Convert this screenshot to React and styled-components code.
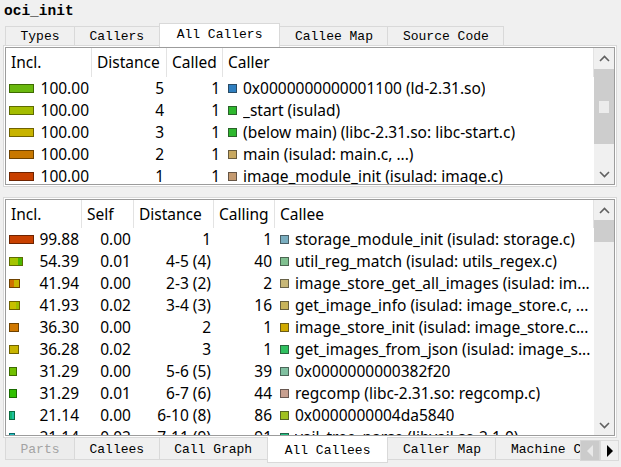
import React from 'react';
import styled, { createGlobalStyle } from 'styled-components';

const GlobalStyle = createGlobalStyle`
  html, body { margin: 0; padding: 0; background: #f0f0f0; }
  body { font-family: "Noto Sans", "Open Sans", sans-serif; }
  * { box-sizing: border-box; }
`;

const Window = styled.div`
  width: 621px;
  height: 467px;
  overflow: hidden;
  background: #f0f0f0;
  display: flex;
  flex-direction: column;
`;

const Title = styled.div`
  flex: none;
  height: 23px;
  padding: 2px 0 0 4px;
  font-family: "Liberation Mono", "DejaVu Sans Mono", monospace;
  font-weight: 700;
  font-size: 14.5px;
  line-height: 18px;
  color: #000;
`;

const TopTabBar = styled.div`
  flex: none;
  display: flex;
  align-items: flex-end;
  height: 22px;
  padding-left: 5px;
  position: relative;
  z-index: 2;
`;

const TopTab = styled.div`
  flex: none;
  white-space: nowrap;
  font-family: "Liberation Mono", "DejaVu Sans Mono", monospace;
  font-size: 13px;
  color: #000;
  border: 1px solid #d9d9d9;
  border-bottom: none;
  background: ${p => (p.$active ? '#fff' : '#f0f0f0')};
  padding: ${p => (p.$active ? '0 17px' : '1px 14.5px 0')};
  height: ${p => (p.$active ? '24px' : '19px')};
  line-height: ${p => (p.$active ? '22px' : '17px')};
  margin-bottom: ${p => (p.$active ? '-2px' : '0')};
  position: relative;
  z-index: ${p => (p.$active ? 1 : 0)};
  & + & { margin-left: -1px; }
`;

const Pane = styled.div`
  flex: none;
  margin-left: 3px;
  width: 614px;
  height: ${p => p.$h}px;
  margin-top: ${p => p.$gap || 0}px;
  border: 1px solid #d9d9d9;
  padding: 1px;
  background: #fff;
`;

const Frame = styled.div`
  height: 100%;
  border: 1px solid #9c9c9c;
  display: flex;
  background: #fff;
  overflow: hidden;
`;

const Content = styled.div`
  flex: 1;
  min-width: 0;
  overflow: hidden;
`;

const HeaderRow = styled.div`
  display: grid;
  grid-template-columns: ${p => p.$cols};
  height: ${p => p.$h}px;
`;

const HeaderCell = styled.div`
  padding-left: 5px;
  border-right: 1px solid #e3e3e3;
  font-size: 15.5px;
  line-height: ${p => p.$h}px;
  white-space: nowrap;
  overflow: hidden;
  color: #000;
`;

const Row = styled.div`
  display: grid;
  grid-template-columns: ${p => p.$cols};
  height: 22px;
  font-size: 15.5px;
  line-height: 22px;
  color: #000;
`;

const InclCell = styled.div`
  display: flex;
  align-items: center;
  padding: 0 3px;
  white-space: nowrap;
`;

const Bar = styled.div`
  flex: none;
  display: flex;
  height: 9px;
  border: 1px solid ${p => p.$border};
`;

const BarSeg = styled.div`
  height: 100%;
  background: ${p => p.$c};
`;

const Value = styled.span`
  margin-left: auto;
`;

const NumCell = styled.div`
  text-align: right;
  padding-right: 3px;
  white-space: nowrap;
  overflow: hidden;
`;

const NameCell = styled.div`
  display: flex;
  align-items: center;
  padding: 0 0 0 5px;
  min-width: 0;
`;

const Swatch = styled.span`
  flex: none;
  width: 9px;
  height: 9px;
  margin-right: 6px;
  background: ${p => p.$c};
  border: 1px solid rgba(40, 40, 40, 0.6);
`;

const Name = styled.span`
  overflow: hidden;
  text-overflow: ellipsis;
  white-space: nowrap;
`;

const Scrollbar = styled.div`
  flex: none;
  width: 20px;
  background: #f0f0f0;
  display: flex;
  flex-direction: column;
`;

const ArrowBtn = styled.div`
  flex: none;
  height: 20px;
  display: flex;
  align-items: center;
  justify-content: center;
`;

const Track = styled.div`
  flex: 1;
  min-height: 0;
`;

const Thumb = styled.div`
  margin-top: ${p => p.$top}px;
  height: ${p => p.$len}px;
  background: #cdcdcd;
  display: flex;
  align-items: center;
  justify-content: center;
`;

const Grip = styled.div`
  width: 10px;
  height: 12px;
  background: #ececec;
`;

const BottomTabBar = styled.div`
  flex: none;
  display: flex;
  align-items: flex-start;
  margin-top: -1px;
  height: 27px;
  padding-left: 5px;
  position: relative;
  z-index: 2;
`;

const TabStrip = styled.div`
  flex: none;
  width: 575px;
  display: flex;
  align-items: flex-start;
  overflow: hidden;
`;

const BottomTab = styled.div`
  flex: none;
  white-space: nowrap;
  font-family: "Liberation Mono", "DejaVu Sans Mono", monospace;
  font-size: 13px;
  color: ${p => (p.$disabled ? '#a3a3a3' : '#000')};
  border: 1px solid #d9d9d9;
  border-top: none;
  background: ${p => (p.$active ? '#fff' : p.$disabled ? '#ececec' : '#f0f0f0')};
  padding: ${p => (p.$active ? '5px 17px 2px' : '3px 14.5px 0')};
  line-height: 18px;
  margin-top: ${p => (p.$active ? '0' : '1px')};
  position: relative;
  z-index: ${p => (p.$active ? 1 : 0)};
  & + & { margin-left: -1px; }
`;

const ScrollBtn = styled.div`
  flex: none;
  margin-top: 3px;
  width: ${p => p.$w}px;
  height: 21px;
  display: flex;
  align-items: center;
  justify-content: center;
  background: ${p => (p.$dim ? '#cbcbcb' : '#f0f0f0')};
  border: 1px solid ${p => (p.$dim ? '#d6d6d6' : '#dadada')};
`;

const Chevron = ({ up }) => (
  <svg width="11" height="7" viewBox="0 0 11 7">
    <path
      d={up ? 'M1 6 L5.5 1.5 L10 6' : 'M1 1 L5.5 5.5 L10 1'}
      fill="none"
      stroke="#606060"
      strokeWidth="1.6"
    />
  </svg>
);

const Tri = ({ left, color }) => (
  <svg width="8" height="12" viewBox="0 0 8 12">
    <polygon points={left ? '7,0 7,12 1,6' : '1,0 1,12 7,6'} fill={color} />
  </svg>
);

const topCols = '86px 75px 56px 1fr';
const botCols = '76px 52px 80px 61px 1fr';

const topRows = [
  { incl: '100.00', dist: '5', called: '1', sw: '#2f7fc0', name: '0x0000000000001100 (ld-2.31.so)', bar: { b: '#3d6b00', s: [[23, '#6ab80e']] } },
  { incl: '100.00', dist: '4', called: '1', sw: '#2eb82e', name: '_start (isulad)', bar: { b: '#5e6b00', s: [[23, '#a4bd00']] } },
  { incl: '100.00', dist: '3', called: '1', sw: '#2eb82e', name: '(below main) (libc-2.31.so: libc-start.c)', bar: { b: '#6f6200', s: [[23, '#c8b400']] } },
  { incl: '100.00', dist: '2', called: '1', sw: '#c8a860', name: 'main (isulad: main.c, ...)', bar: { b: '#6e4200', s: [[23, '#c87800']] } },
  { incl: '100.00', dist: '1', called: '1', sw: '#c49a70', name: 'image_module_init (isulad: image.c)', bar: { b: '#6e2300', s: [[23, '#c84000']] } },
];

const botRows = [
  { incl: '99.88', self: '0.00', dist: '1', calling: '1', sw: '#7aaec0', name: 'storage_module_init (isulad: storage.c)', bar: { b: '#6e2300', s: [[23, '#c84000']] } },
  { incl: '54.39', self: '0.01', dist: '4-5 (4)', calling: '40', sw: '#80c090', name: 'util_reg_match (isulad: utils_regex.c)', bar: { b: '#5e6b00', s: [[8, '#a4c400'], [4, '#4cb800']] } },
  { incl: '41.94', self: '0.00', dist: '2-3 (2)', calling: '2', sw: '#c8b878', name: 'image_store_get_all_images (isulad: im...', bar: { b: '#6e4200', s: [[4, '#d07000'], [5, '#c8b400']] } },
  { incl: '41.93', self: '0.02', dist: '3-4 (3)', calling: '16', sw: '#c8b45a', name: 'get_image_info (isulad: image_store.c, ...', bar: { b: '#6f6200', s: [[6, '#c8c000'], [3, '#a0c000']] } },
  { incl: '36.30', self: '0.00', dist: '2', calling: '1', sw: '#d0aa00', name: 'image_store_init (isulad: image_store.c...', bar: { b: '#6e4200', s: [[8, '#d07800']] } },
  { incl: '36.28', self: '0.02', dist: '3', calling: '1', sw: '#30c060', name: 'get_images_from_json (isulad: image_s...', bar: { b: '#6f6200', s: [[8, '#c8b400']] } },
  { incl: '31.29', self: '0.00', dist: '5-6 (5)', calling: '39', sw: '#80c0a0', name: '0x0000000000382f20', bar: { b: '#3d6b00', s: [[6, '#70c000']] } },
  { incl: '31.29', self: '0.01', dist: '6-7 (6)', calling: '44', sw: '#c8a090', name: 'regcomp (libc-2.31.so: regcomp.c)', bar: { b: '#1a6b00', s: [[6, '#30c000']] } },
  { incl: '21.14', self: '0.00', dist: '6-10 (8)', calling: '86', sw: '#a0c020', name: '0x0000000004da5840', bar: { b: '#0a6b40', s: [[2, '#10b870'], [2, '#20c0a0']] } },
  { incl: '21.14', self: '0.02', dist: '7-11 (9)', calling: '91', sw: '#20c080', name: 'vail_tree_parse (libvail.so.2.1.0)', bar: { b: '#0a6b6b', s: [[4, '#20c0c0']] } },
];

const CostBar = ({ bar }) => (
  <Bar $border={bar.b}>
    {bar.s.map(([w, c], i) => (
      <BarSeg key={i} $c={c} style={{ width: w }} />
    ))}
  </Bar>
);

const VScroll = ({ thumbTop, thumbLen, grip }) => (
  <Scrollbar>
    <ArrowBtn><Chevron up /></ArrowBtn>
    <Track>
      <Thumb $top={thumbTop} $len={thumbLen}>{grip && <Grip />}</Thumb>
    </Track>
    <ArrowBtn><Chevron /></ArrowBtn>
  </Scrollbar>
);

export default function App() {
  return (
    <Window>
      <GlobalStyle />
      <Title>oci_init</Title>
      <TopTabBar>
        <TopTab>Types</TopTab>
        <TopTab>Callers</TopTab>
        <TopTab $active>All Callers</TopTab>
        <TopTab>Callee Map</TopTab>
        <TopTab>Source Code</TopTab>
      </TopTabBar>

      <Pane $h={142}>
        <Frame>
          <Content>
            <HeaderRow $cols={topCols} $h={29}>
              <HeaderCell $h={29}>Incl.</HeaderCell>
              <HeaderCell $h={29}>Distance</HeaderCell>
              <HeaderCell $h={29}>Called</HeaderCell>
              <HeaderCell $h={29}>Caller</HeaderCell>
            </HeaderRow>
            {topRows.map((r, i) => (
              <Row key={i} $cols={topCols}>
                <InclCell><CostBar bar={r.bar} /><Value>{r.incl}</Value></InclCell>
                <NumCell>{r.dist}</NumCell>
                <NumCell>{r.called}</NumCell>
                <NameCell><Swatch $c={r.sw} /><Name>{r.name}</Name></NameCell>
              </Row>
            ))}
          </Content>
          <VScroll thumbTop={1} thumbLen={75} grip />
        </Frame>
      </Pane>

      <Pane $h={241} $gap={10}>
        <Frame>
          <Content>
            <HeaderRow $cols={botCols} $h={28}>
              <HeaderCell $h={28}>Incl.</HeaderCell>
              <HeaderCell $h={28}>Self</HeaderCell>
              <HeaderCell $h={28}>Distance</HeaderCell>
              <HeaderCell $h={28}>Calling</HeaderCell>
              <HeaderCell $h={28}>Callee</HeaderCell>
            </HeaderRow>
            {botRows.map((r, i) => (
              <Row key={i} $cols={botCols}>
                <InclCell><CostBar bar={r.bar} /><Value>{r.incl}</Value></InclCell>
                <NumCell>{r.self}</NumCell>
                <NumCell>{r.dist}</NumCell>
                <NumCell>{r.calling}</NumCell>
                <NameCell><Swatch $c={r.sw} /><Name>{r.name}</Name></NameCell>
              </Row>
            ))}
          </Content>
          <VScroll thumbTop={0} thumbLen={22} />
        </Frame>
      </Pane>

      <BottomTabBar>
        <TabStrip>
          <BottomTab $disabled>Parts</BottomTab>
          <BottomTab>Callees</BottomTab>
          <BottomTab>Call Graph</BottomTab>
          <BottomTab $active>All Callees</BottomTab>
          <BottomTab>Caller Map</BottomTab>
          <BottomTab>Machine Code</BottomTab>
        </TabStrip>
        <ScrollBtn $w={20} $dim><Tri left color="#e9e9e9" /></ScrollBtn>
        <ScrollBtn $w={19}><Tri color="#000" /></ScrollBtn>
      </BottomTabBar>
    </Window>
  );
}
